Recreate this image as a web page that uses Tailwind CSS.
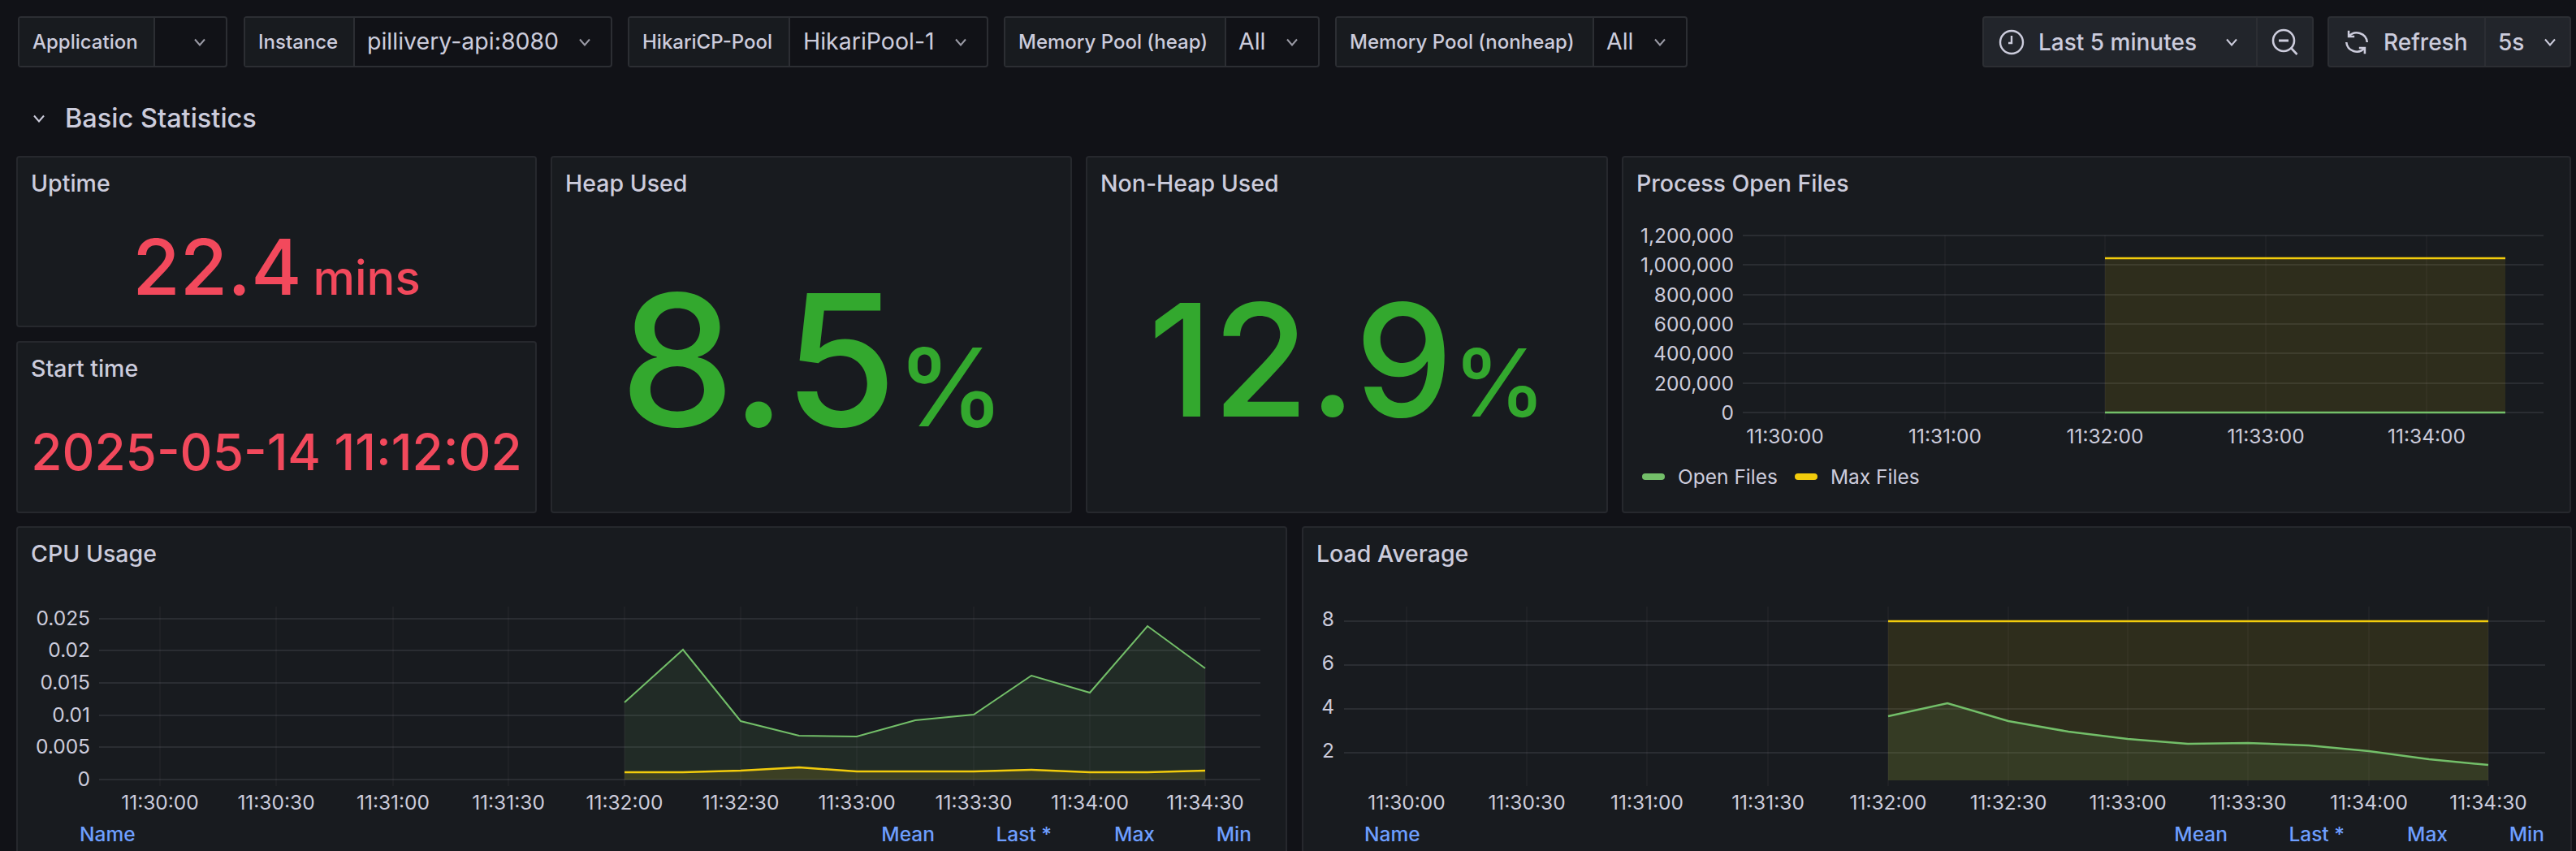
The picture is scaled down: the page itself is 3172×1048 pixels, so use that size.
<!DOCTYPE html>
<html lang="en">
<head>
    <meta charset="UTF-8">
    <title>Spring Boot Statistics</title>
    <script src="https://cdn.jsdelivr.net/npm/@tailwindcss/browser@4"></script>
</head>
<body class="bg-[#111217] text-[#ccccdc] font-['Inter',sans-serif] h-[1048px] overflow-hidden">
    <!-- toolbar -->
    <div class="flex pl-[22px] pr-[6px] pt-[20px] h-[83px] text-[24px] font-medium">
        <div class="flex h-[63px] w-[258px] mr-[20px] rounded-[4px] border-2 border-[#2c2e33]">
            <div class="w-[167px] pl-[16px] flex items-center bg-[#181b1f] border-r-2 border-[#2c2e33]">Application</div>
            <div class="flex-1 flex items-center justify-end pr-[24px]"><svg width="16" height="10" viewBox="0 0 16 10" fill="none" stroke="#9a9aa5" stroke-width="2"><path d="M2 1.5l6 7 6-7"/></svg></div>
        </div>
        <div class="flex h-[63px] w-[454px] mr-[19px] rounded-[4px] border-2 border-[#2c2e33]">
            <div class="w-[135px] pl-[16px] flex items-center bg-[#181b1f] border-r-2 border-[#2c2e33]">Instance</div>
            <div class="flex-1 flex items-center justify-between pl-[15px] pr-[24px] text-[28.5px] font-normal">pillivery-api:8080<svg width="16" height="10" viewBox="0 0 16 10" fill="none" stroke="#9a9aa5" stroke-width="2"><path d="M2 1.5l6 7 6-7"/></svg></div>
        </div>
        <div class="flex h-[63px] w-[444px] mr-[19px] rounded-[4px] border-2 border-[#2c2e33]">
            <div class="w-[198px] pl-[16px] flex items-center bg-[#181b1f] border-r-2 border-[#2c2e33]">HikariCP-Pool</div>
            <div class="flex-1 flex items-center justify-between pl-[16px] pr-[24px] text-[28.5px] font-normal">HikariPool-1<svg width="16" height="10" viewBox="0 0 16 10" fill="none" stroke="#9a9aa5" stroke-width="2"><path d="M2 1.5l6 7 6-7"/></svg></div>
        </div>
        <div class="flex h-[63px] w-[389px] mr-[19px] rounded-[4px] border-2 border-[#2c2e33]">
            <div class="w-[272px] pl-[16px] flex items-center bg-[#181b1f] border-r-2 border-[#2c2e33]">Memory Pool (heap)</div>
            <div class="flex-1 flex items-center justify-between pl-[15px] pr-[24px] text-[28.5px] font-normal">All<svg width="16" height="10" viewBox="0 0 16 10" fill="none" stroke="#9a9aa5" stroke-width="2"><path d="M2 1.5l6 7 6-7"/></svg></div>
        </div>
        <div class="flex h-[63px] w-[434px] rounded-[4px] border-2 border-[#2c2e33]">
            <div class="w-[317px] pl-[16px] flex items-center bg-[#181b1f] border-r-2 border-[#2c2e33]">Memory Pool (nonheap)</div>
            <div class="flex-1 flex items-center justify-between pl-[15px] pr-[24px] text-[28.5px] font-normal">All<svg width="16" height="10" viewBox="0 0 16 10" fill="none" stroke="#9a9aa5" stroke-width="2"><path d="M2 1.5l6 7 6-7"/></svg></div>
        </div>

        <div class="ml-auto flex h-[63px] w-[408px] mr-[17px] rounded-[4px] border-2 border-[#2c2e33] bg-[#22252b] text-[28px]">
            <div class="w-[337px] pl-[18px] pr-[22px] flex items-center border-r-2 border-[#2c2e33]">
                <svg width="32" height="32" viewBox="0 0 32 32" fill="none" stroke="#ccccdc" stroke-width="2.4"><circle cx="16" cy="16" r="14"/><path d="M16 8v9h-4"/></svg>
                <span class="ml-[17px] flex-1">Last 5 minutes</span>
                <svg width="16" height="10" viewBox="0 0 16 10" fill="none" stroke="#ccccdc" stroke-width="2"><path d="M2 1.5l6 7 6-7"/></svg>
            </div>
            <div class="flex-1 flex items-center justify-center">
                <svg width="34" height="34" viewBox="0 0 34 34" fill="none" stroke="#ccccdc" stroke-width="2.6"><circle cx="15" cy="15" r="13"/><path d="M9 15h12" stroke-width="3"/><path d="M24.5 24.5l7 7.5"/></svg>
            </div>
        </div>
        <div class="flex h-[63px] w-[300px] rounded-[4px] border-2 border-[#2c2e33] bg-[#22252b] text-[28px]">
            <div class="w-[193px] pl-[17px] flex items-center border-r-2 border-[#2c2e33]">
                <svg width="34" height="34" viewBox="0 0 24 24" fill="none" stroke="#ccccdc" stroke-width="1.8"><path d="M5 2v5h5"/><path d="M5.2 7A9 9 0 0 1 21 12"/><path d="M3 12a9 9 0 0 0 15.8 5"/><path d="M19 22v-5h-5"/></svg>
                <span class="ml-[16px]">Refresh</span>
            </div>
            <div class="flex-1 flex items-center justify-between pl-[15px] pr-[16px]">5s<svg width="16" height="10" viewBox="0 0 16 10" fill="none" stroke="#ccccdc" stroke-width="2"><path d="M2 1.5l6 7 6-7"/></svg></div>
        </div>
    </div>

    <!-- row header -->
    <div class="flex items-center h-[109px] pl-[40px] pt-[17px] text-[32.5px] font-medium">
        <svg width="16" height="10" viewBox="0 0 16 10" fill="none" stroke="#ccccdc" stroke-width="2"><path d="M2 1.5l6 7 6-7"/></svg>
        <span class="ml-[24px]">Basic Statistics</span>
    </div>

    <!-- panels -->
    <div class="pl-[20px] pr-[6px]">
        <div class="grid grid-cols-[641px_642px_643px_1fr] grid-rows-[211px_212px] gap-x-[17px] gap-y-[17px]">
            <div class="bg-[#181b1f] border-2 border-[#26282d] rounded-[4px]">
                <div class="h-[70px] pl-[16px] pt-[11px] text-[28.5px] font-medium">Uptime</div>
                <div class="flex items-baseline justify-center pt-[17px] text-[#f2495c] font-medium leading-none">
                    <span class="text-[95px]">22.4</span><span class="text-[58px] ml-[14px]">mins</span>
                </div>
            </div>
            <div class="row-span-2 bg-[#181b1f] border-2 border-[#26282d] rounded-[4px]">
                <div class="h-[70px] pl-[16px] pt-[11px] text-[28.5px] font-medium">Heap Used</div>
                <div class="flex items-baseline justify-center pl-[2px] pt-[67px] text-[#33a82e] font-medium leading-none">
                    <span class="text-[225px]">8.5</span><span class="text-[133px]">%</span>
                </div>
            </div>
            <div class="row-span-2 bg-[#181b1f] border-2 border-[#26282d] rounded-[4px]">
                <div class="h-[70px] pl-[16px] pt-[11px] text-[28.5px] font-medium">Non-Heap Used</div>
                <div class="flex items-baseline justify-center pt-[83px] text-[#33a82e] font-medium leading-none">
                    <span class="text-[192px]">12.9</span><span class="text-[115px]">%</span>
                </div>
            </div>
            <div class="row-span-2 bg-[#181b1f] border-2 border-[#26282d] rounded-[4px]">
                <div class="h-[70px] pl-[16px] pt-[11px] text-[28.5px] font-medium">Process Open Files</div>
                <svg class="block" width="1165" height="290" viewBox="1999 264 1165 290" font-size="24.5" fill="#ccccdc">
                    <g stroke="#ccccdc" stroke-opacity="0.08" stroke-width="1">
                        <path d="M2198 290V517M2395 290V517M2592 290V517M2790 290V517M2988 290V517"/>
                    </g>
                    <g stroke="#ccccdc" stroke-opacity="0.14" stroke-width="1.5">
                        <path d="M2146 290H3132M2146 326H3132M2146 363H3132M2146 399H3132M2146 435H3132M2146 472H3132M2146 508H3132"/>
                    </g>
                    <rect x="2592" y="318" width="493" height="190" fill="#f2cc0c" fill-opacity="0.1"/>
                    <path d="M2592 318H3085" stroke="#f2cc0c" stroke-width="2.5"/>
                    <path d="M2592 508H3085" stroke="#73bf69" stroke-width="2.5"/>
                    <g text-anchor="end">
                        <text x="2135" y="299">1,200,000</text><text x="2135" y="335">1,000,000</text><text x="2135" y="372">800,000</text><text x="2135" y="408">600,000</text><text x="2135" y="444">400,000</text><text x="2135" y="481">200,000</text><text x="2135" y="517">0</text>
                    </g>
                    <g text-anchor="middle">
                        <text x="2198" y="546">11:30:00</text><text x="2395" y="546">11:31:00</text><text x="2592" y="546">11:32:00</text><text x="2790" y="546">11:33:00</text><text x="2988" y="546">11:34:00</text>
                    </g>
                </svg>
                <div class="flex items-center pl-[23px] mt-[21px] text-[24.5px] leading-none">
                    <span class="w-[28px] h-[8px] rounded-full bg-[#73bf69]"></span><span class="ml-[16px]">Open Files</span>
                    <span class="ml-[21px] w-[28px] h-[8px] rounded-full bg-[#f2cc0c]"></span><span class="ml-[16px]">Max Files</span>
                </div>
            </div>
            <div class="bg-[#181b1f] border-2 border-[#26282d] rounded-[4px]">
                <div class="h-[70px] pl-[16px] pt-[11px] text-[28.5px] font-medium">Start time</div>
                <div class="flex justify-center pt-[34px] text-[62px] text-[#f2495c] font-medium leading-none">2025-05-14 11:12:02</div>
            </div>
        </div>

        <div class="grid grid-cols-[1565px_1fr] gap-x-[18px] mt-[16px]">
            <div class="h-[420px] bg-[#181b1f] border-2 border-[#26282d] rounded-[4px]">
                <div class="h-[70px] pl-[16px] pt-[11px] text-[28.5px] font-medium">CPU Usage</div>
                <svg class="block" width="1561" height="284" viewBox="22 720 1561 284" font-size="24.5" fill="#ccccdc">
                    <path d="M197 747V968M340 747V968M484 747V968M626 747V968M769 747V968M912 747V968M1055 747V968M1199 747V968M1342 747V968M1484 747V968" stroke="#ccccdc" stroke-opacity="0.08"/>
                    <path d="M122 762H1552M122 801H1552M122 841H1552M122 881H1552M122 920H1552M122 960H1552" stroke="#ccccdc" stroke-opacity="0.14" stroke-width="1.5"/>
                    <path d="M769 865L841 800L912 888L984 906L1055 907L1127 887L1199 880L1270 832L1342 853L1413 771L1484 823V960H769Z" fill="#73bf69" fill-opacity="0.1"/>
                    <path d="M769 865L841 800L912 888L984 906L1055 907L1127 887L1199 880L1270 832L1342 853L1413 771L1484 823" fill="none" stroke="#73bf69" stroke-width="2"/>
                    <path d="M769 951L841 951L912 949L984 945L1055 950L1127 950L1199 950L1270 948L1342 951L1413 951L1484 949V960H769Z" fill="#f2cc0c" fill-opacity="0.13"/>
                    <path d="M769 951L841 951L912 949L984 945L1055 950L1127 950L1199 950L1270 948L1342 951L1413 951L1484 949" fill="none" stroke="#f2cc0c" stroke-width="2.5"/>
                    <g text-anchor="end">
                        <text x="111" y="770">0.025</text><text x="111" y="809">0.02</text><text x="111" y="849">0.015</text><text x="111" y="889">0.01</text><text x="111" y="928">0.005</text><text x="111" y="968">0</text>
                    </g>
                    <g text-anchor="middle">
                        <text x="197" y="997">11:30:00</text><text x="340" y="997">11:30:30</text><text x="484" y="997">11:31:00</text><text x="626" y="997">11:31:30</text><text x="769" y="997">11:32:00</text><text x="912" y="997">11:32:30</text><text x="1055" y="997">11:33:00</text><text x="1199" y="997">11:33:30</text><text x="1342" y="997">11:34:00</text><text x="1484" y="997">11:34:30</text>
                    </g>
                </svg>
                <div class="flex pl-[76px] pr-[42px] mt-[8px] text-[24.5px] font-medium text-[#6e9fff] leading-[30px]">
                    <span class="flex-1">Name</span><span>Mean</span><span class="w-[144px] text-right">Last *</span><span class="w-[127px] text-right">Max</span><span class="w-[119px] text-right">Min</span>
                </div>
            </div>
            <div class="h-[420px] bg-[#181b1f] border-2 border-[#26282d] rounded-[4px]">
                <div class="h-[70px] pl-[16px] pt-[11px] text-[28.5px] font-medium">Load Average</div>
                <svg class="block" width="1560" height="284" viewBox="1605 720 1560 284" font-size="24.5" fill="#ccccdc">
                    <path d="M1732 747V968M1880 747V968M2028 747V968M2177 747V968M2325 747V968M2473 747V968M2620 747V968M2768 747V968M2917 747V968M3064 747V968" stroke="#ccccdc" stroke-opacity="0.08"/>
                    <path d="M1655 765H3134M1655 819H3134M1655 873H3134M1655 927H3134" stroke="#ccccdc" stroke-opacity="0.14" stroke-width="1.5"/>
                    <rect x="2325" y="765" width="739" height="196" fill="#f2cc0c" fill-opacity="0.1"/>
                    <path d="M2325 882L2398 866L2473 888L2547 901L2620 910L2694 916L2768 915L2843 918L2917 925L2991 935L3064 942V961H2325Z" fill="#73bf69" fill-opacity="0.1"/>
                    <path d="M2325 765H3064" stroke="#f2cc0c" stroke-width="2.5"/>
                    <path d="M2325 882L2398 866L2473 888L2547 901L2620 910L2694 916L2768 915L2843 918L2917 925L2991 935L3064 942" fill="none" stroke="#73bf69" stroke-width="2.5"/>
                    <g text-anchor="end">
                        <text x="1643" y="771">8</text><text x="1643" y="825">6</text><text x="1643" y="879">4</text><text x="1643" y="933">2</text>
                    </g>
                    <g text-anchor="middle">
                        <text x="1732" y="997">11:30:00</text><text x="1880" y="997">11:30:30</text><text x="2028" y="997">11:31:00</text><text x="2177" y="997">11:31:30</text><text x="2325" y="997">11:32:00</text><text x="2473" y="997">11:32:30</text><text x="2620" y="997">11:33:00</text><text x="2768" y="997">11:33:30</text><text x="2917" y="997">11:34:00</text><text x="3064" y="997">11:34:30</text>
                    </g>
                </svg>
                <div class="flex pl-[75px] pr-[32px] mt-[8px] text-[24.5px] font-medium text-[#6e9fff] leading-[30px]">
                    <span class="flex-1">Name</span><span>Mean</span><span class="w-[144px] text-right">Last *</span><span class="w-[127px] text-right">Max</span><span class="w-[119px] text-right">Min</span>
                </div>
            </div>
        </div>
    </div>
</body>
</html>
